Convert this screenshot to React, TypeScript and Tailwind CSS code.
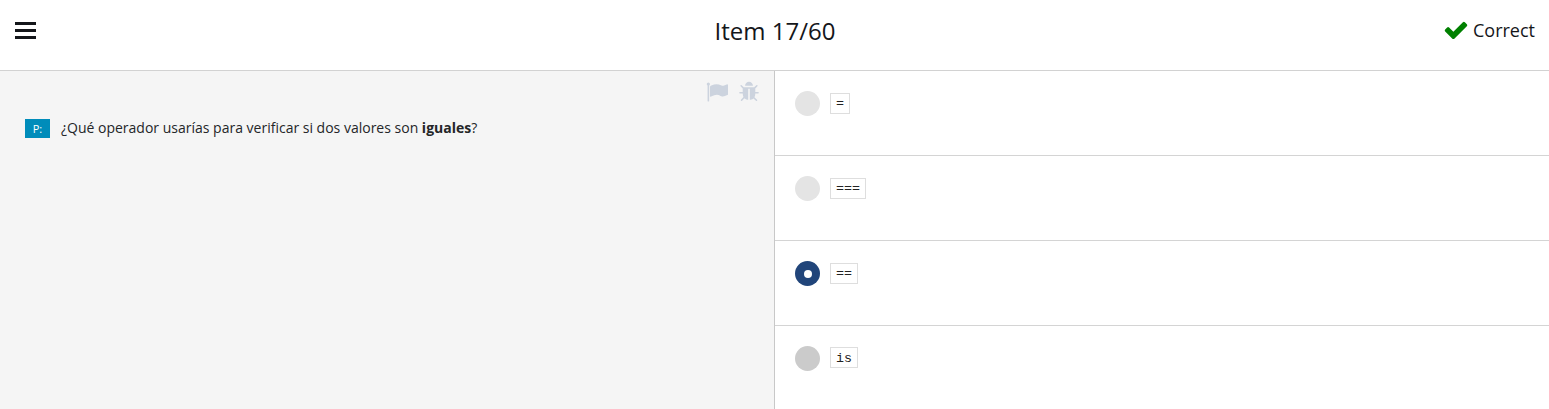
import React from 'react';

const CheckIcon = () => (
  <svg className="h-[26px] w-[26px]" viewBox="0 0 1792 1792" fill="currentColor" aria-hidden="true">
    <path d="M1671 566q0 40-28 68l-724 724-136 136q-28 28-68 28t-68-28l-136-136-362-362q-28-28-28-68t28-68l136-136q28-28 68-28t68 28l294 295 656-657q28-28 68-28t68 28l136 136q28 28 28 68z" />
  </svg>
);

const FlagIcon = () => (
  <svg className="h-[22px] w-[22px]" viewBox="0 0 1792 1792" fill="currentColor" aria-hidden="true">
    <path d="M320 256q0 72-64 110v1266q0 13-9.5 22.5t-22.5 9.5h-64q-13 0-22.5-9.5t-9.5-22.5v-1266q-64-38-64-110 0-53 37.5-90.5t90.5-37.5 90.5 37.5 37.5 90.5zm1472 64v763q0 25-12.5 38.5t-39.5 27.5q-215 116-369 116-61 0-123.5-22t-108.5-48-115.5-48-142.5-22q-192 0-464 146-17 9-33 9-26 0-45-19t-19-45v-742q0-32 31-55 21-14 79-43 236-120 421-120 107 0 200 29t219 88q38 19 88 19 54 0 117.5-21t110-47 88-47 54.5-21q26 0 45 19t19 45z" />
  </svg>
);

const BugIcon = () => (
  <svg className="h-[22px] w-[22px]" viewBox="0 0 1792 1792" fill="currentColor" aria-hidden="true">
    <path d="M1696 960q0 26-19 45t-45 19h-224q0 171-67 290l208 209q19 19 19 45t-19 45q-18 19-45 19t-45-19l-198-197q-5 5-15 13t-42 28.5-65 36.5-82 29-97 13v-896h-128v896q-51 0-101.5-13.5t-87-33-66-39-43.5-32.5l-15-14-183 207q-20 21-48 21-24 0-43-16-19-18-20.5-44.5t15.5-46.5l202-227q-58-114-58-274h-224q-26 0-45-19t-19-45 19-45 45-19h224v-294l-173-173q-19-19-19-45t19-45 45-19 45 19l173 173h844l173-173q19-19 45-19t45 19 19 45-19 45l-173 173v294h224q26 0 45 19t19 45zm-480-576h-640q0-133 93.5-226.5t226.5-93.5 226.5 93.5 93.5 226.5z" />
  </svg>
);

const MenuIcon = () => (
  <svg className="h-[17px] w-[21px]" viewBox="0 0 21 17" fill="currentColor" aria-hidden="true">
    <path d="M0 0h21v3H0zM0 7h21v3H0zM0 14h21v3H0z" />
  </svg>
);

type State = 'idle' | 'selected' | 'hover';

const options: { code: string; state: State }[] = [
  { code: '=', state: 'idle' },
  { code: '===', state: 'idle' },
  { code: '==', state: 'selected' },
  { code: 'is', state: 'hover' },
];

const dotColor: Record<State, string> = {
  idle: 'bg-[#e4e4e4]',
  selected: 'bg-[#21457a]',
  hover: 'bg-[#cbcbcb]',
};

export default function App() {
  return (
    <div className="flex h-[409px] flex-col overflow-hidden bg-white font-['Open_Sans',sans-serif] text-[#14161a]">
      <header className="grid h-[71px] shrink-0 grid-cols-[1fr_auto_1fr] items-center border-b border-[#d2d2d2] pr-[14px] pb-[9px] pl-[15px]">
        <button className="justify-self-start" aria-label="Menu">
          <MenuIcon />
        </button>
        <h1 className="text-[24px] leading-8">Item 17/60</h1>
        <div className="flex items-center gap-1 justify-self-end pb-[2px] text-[18px] leading-6">
          <span className="text-[#008000]">
            <CheckIcon />
          </span>
          Correct
        </div>
      </header>
      <main className="grid min-h-0 flex-1 grid-cols-[775px_1fr]">
        <section className="border-r border-[#c8c8c8] bg-[#f5f5f5]">
          <div className="flex justify-end gap-[10px] pt-[10px] pr-[14.5px] text-[#ccd3de]">
            <FlagIcon />
            <BugIcon />
          </div>
          <div className="mt-[15px] flex items-center pl-[25px] text-[14px] leading-5 text-[#242628]">
            <span className="mr-[11px] flex h-[19px] w-[25px] items-center justify-center bg-[#008cba] pt-px text-[11px] text-white">
              P:
            </span>
            <p>
              ¿Qué operador usarías para verificar si dos valores son <strong>iguales</strong>?
            </p>
          </div>
        </section>
        <section>
          {options.map(({ code, state }) => (
            <div key={code} className="flex h-[85px] items-start border-b border-[#d4d4d4] pt-5 pl-5">
              <span className={`flex h-[25px] w-[25px] items-center justify-center rounded-full ${dotColor[state]}`}>
                {state === 'selected' && <span className="h-2 w-2 rounded-full bg-white" />}
              </span>
              <code
                className={`ml-[10px] flex h-[21px] items-center border border-[#dedede] px-[5px] font-['Liberation_Mono',monospace] text-[13.33px] text-[#222] ${state === 'hover' ? 'mt-px pt-[2px]' : 'mt-[2px]'}`}
              >
                {code}
              </code>
            </div>
          ))}
        </section>
      </main>
    </div>
  );
}
